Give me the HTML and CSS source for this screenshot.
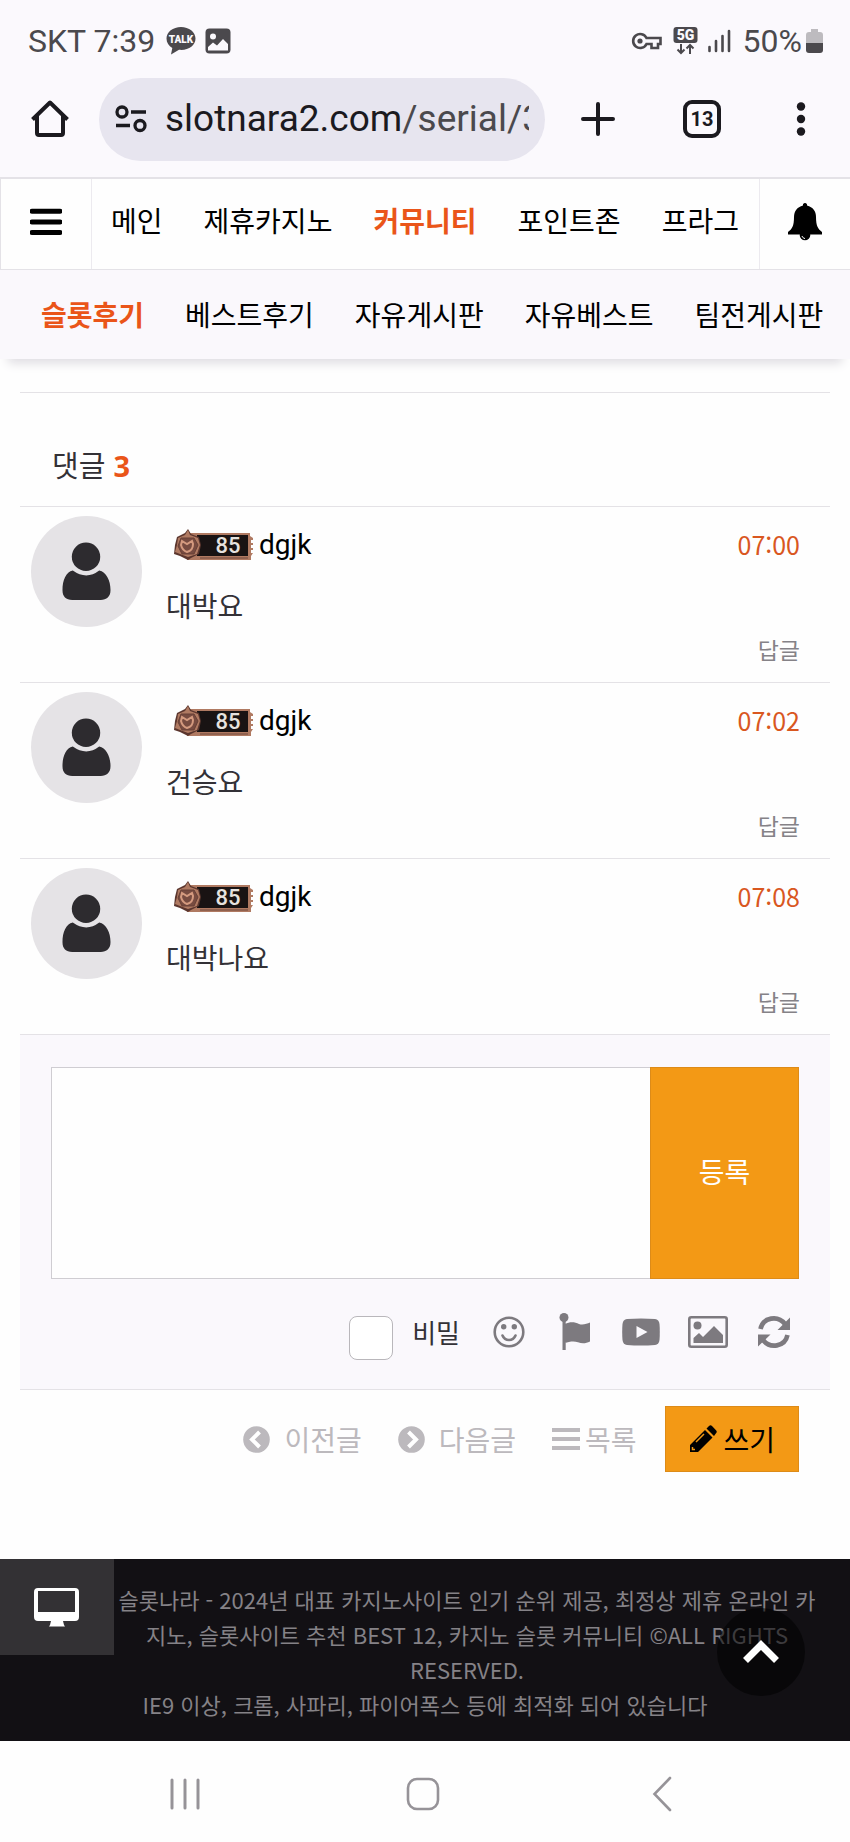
FILE: index.html
```html
<!DOCTYPE html>
<html lang="ko">
<head>
<meta charset="utf-8">
<meta name="viewport" content="width=device-width, initial-scale=1">
<title>슬롯나라</title>
<link rel="stylesheet" href="styles.css">
</head>
<body>
<div class="chrome">
  <div class="status">
    <span class="status-text">SKT 7:39</span>
    <svg class="talk" width="30" height="28" viewBox="0 0 30 28" aria-hidden="true"><path fill="#4b494d" d="M15 0C7 0 .5 5 .5 11.500c0 4.300 2.300 7.500 5.800 9.500L5 27.500l8-4.700c9 1 16.500-4 16.500-11.300C29.500 5 23 0 15 0z"/><text x="15" y="15.500" text-anchor="middle" class="talk-label">TALK</text></svg>
    <svg width="26" height="26" viewBox="0 0 26 26" aria-hidden="true"><rect x=".5" y=".5" width="25" height="25" rx="4" fill="#4b494d"/><circle cx="8" cy="8.500" r="3" fill="#fbf9fd"/><path fill="#fbf9fd" d="M3 19l5-4.500 4 3L18 11l5 5v6.500H3z"/></svg>
    <span class="grow"></span>
    <svg class="key" width="31" height="18" viewBox="0 0 31 18" aria-hidden="true"><path d="M15.500 6h14v6H27v4h-6.500v-4h-5A7 7 0 1 1 15.500 6z" fill="none" stroke="#4b494d" stroke-width="2.600"/><circle cx="9" cy="9" r="2.600" fill="#4b494d"/></svg>
    <svg class="five" width="25" height="28" viewBox="0 0 25 28" aria-hidden="true"><rect x=".5" width="24" height="16" rx="3" fill="#4b494d"/><text x="12.500" y="13" text-anchor="middle" class="five-label">5G</text><path d="M8 17v9M4.500 22.500L8 26l3.500-3.500M17 27v-9M13.500 21.500L17 18l3.500 3.500" fill="none" stroke="#4b494d" stroke-width="2"/></svg>
    <svg class="signal" width="24" height="24" viewBox="0 0 24 24" aria-hidden="true"><path d="M2.500 22v-4M9 22V12M15.500 22V7M22 22V2" stroke="#4b494d" stroke-width="2.600" stroke-linecap="round"/></svg>
    <span class="status-text">50%</span>
    <svg class="battery" width="17" height="24" viewBox="0 0 17 24" aria-hidden="true"><path fill="#bdbbbf" d="M5 0h7v3h2a3 3 0 0 1 3 3v9H0V6a3 3 0 0 1 3-3h2z"/><path fill="#4b494d" d="M0 14h17v7a3 3 0 0 1-3 3H3a3 3 0 0 1-3-3z"/></svg>
  </div>
  <div class="toolbar">
    <button class="bare home" type="button" aria-label="홈"><svg width="38" height="38" viewBox="0 0 38 38"><path d="M1.500 19.500L19 2.500l17.500 17M6 16v17a2 2 0 0 0 2 2h22a2 2 0 0 0 2-2V16" fill="none" stroke="#1b1a1f" stroke-width="4" stroke-linejoin="round"/></svg></button>
    <a class="address" href="#">
      <svg width="32" height="28" viewBox="0 0 32 28" aria-hidden="true"><g fill="none" stroke="#1b1a1f" stroke-width="3.300"><circle cx="7" cy="7" r="5"/><circle cx="25" cy="20.500" r="5"/><path d="M16 7h15M1 20.500h14"/></g></svg>
      <span class="url"><b>slotnara2.com</b>/serial/3</span>
    </a>
    <button class="bare plus" type="button" aria-label="새 탭"><svg width="34" height="34" viewBox="0 0 34 34"><path d="M17 2v30M2 17h30" stroke="#1b1a1f" stroke-width="4" stroke-linecap="round"/></svg></button>
    <button class="bare tabs" type="button">13</button>
    <button class="bare dots" type="button" aria-label="메뉴"><svg width="10" height="34" viewBox="0 0 10 34" fill="#1b1a1f"><circle cx="5" cy="4.500" r="4.200"/><circle cx="5" cy="17" r="4.200"/><circle cx="5" cy="29.500" r="4.200"/></svg></button>
  </div>
</div>

<header class="site-head">
  <div class="main-row">
    <button class="bare side left" type="button" aria-label="전체 메뉴"><svg width="32" height="28" viewBox="0 0 32 28"><path d="M2 3.200h28M2 14h28M2 24.500h28" stroke="#000" stroke-width="5" stroke-linecap="round"/></svg></button>
    <nav class="main-nav">
      <a href="#">메인</a><a href="#">제휴카지노</a><a class="on" href="#">커뮤니티</a><a href="#">포인트존</a><a href="#">프라그</a>
    </nav>
    <button class="bare side right" type="button" aria-label="알림"><svg width="36" height="38" viewBox="0 0 36 38"><path d="M18 0a2 2 0 0 1 2 2.500C26 4 29 8.500 29 14c0 9 2 12 6 15v2.500H1V29c4-3 6-6 6-15 0-5.500 3-10 9-11.500A2 2 0 0 1 18 0z"/><circle cx="18" cy="32" r="5.300"/><path d="M15 33c.5 1.500 1.500 2.300 3 2.500" fill="none" stroke="#fff" stroke-width="1"/></svg></button>
  </div>
  <nav class="sub-nav">
    <a class="on" href="#">슬롯후기</a><a href="#">베스트후기</a><a href="#">자유게시판</a><a href="#">자유베스트</a><a href="#">팀전게시판</a>
  </nav>
</header>

<svg class="defs" aria-hidden="true">
  <symbol id="person" viewBox="0 0 50 60"><circle cx="24.500" cy="15" r="14.500"/><path d="M11 29q14 10 27 0c7 1.500 11.500 10 11.500 20 0 7-4 10-10 10h-29C4 59 .5 56 .5 49 .5 39 4 30.500 11 29z"/></symbol>
  <symbol id="level" viewBox="0 0 80 34">
    <path fill="#b07a62" d="M12 5h65v3l3 2v2h-2v3h2v2h-2v3h2v2h-2v3h2l-2 3v4H14z"/>
    <path fill="#191313" d="M24 7h51v21H24z"/>
    <path fill="#5b362e" d="M15 1l3 5 8 3 2 8-2 9-8 4-3 2-8-4-6-2 1-9 2-8 8-4z"/>
    <path fill="#b07a62" d="M15 2l2 5 8 3 2 7-3 9-9 3-8-3-5-2 2-7 1-7 7-3z"/>
    <path fill="#774b40" stroke="#684036" stroke-width="1" d="M8 10h13l4 7-4 9H9l-4-8z"/>
    <path fill="none" stroke="#d49a7f" stroke-width="2" d="M9 13l-1 4c1 4 3 6 6 7 4-1 6-4 6-8l-1-3-5 3z"/>
    <path stroke="#71493c" d="M27 30h48"/>
    <text class="level-label" x="55" y="25" text-anchor="middle">85</text>
  </symbol>
</svg>

<main class="board">
  <h2 class="count">댓글 <strong>3</strong></h2>
  <article class="comment">
    <span class="avatar"><svg><use href="#person"/></svg></span>
    <div class="body">
      <div class="meta"><svg class="level"><use href="#level"/></svg><span class="name">dgjk</span><time>07:00</time></div>
      <p>대박요</p>
      <a class="reply" href="#">답글</a>
    </div>
  </article>
  <article class="comment">
    <span class="avatar"><svg><use href="#person"/></svg></span>
    <div class="body">
      <div class="meta"><svg class="level"><use href="#level"/></svg><span class="name">dgjk</span><time>07:02</time></div>
      <p>건승요</p>
      <a class="reply" href="#">답글</a>
    </div>
  </article>
  <article class="comment">
    <span class="avatar"><svg><use href="#person"/></svg></span>
    <div class="body">
      <div class="meta"><svg class="level"><use href="#level"/></svg><span class="name">dgjk</span><time>07:08</time></div>
      <p>대박나요</p>
      <a class="reply" href="#">답글</a>
    </div>
  </article>

  <form class="write">
    <div class="entry">
      <textarea aria-label="댓글 내용"></textarea>
      <button class="submit" type="button">등록</button>
    </div>
    <div class="tools">
      <input type="checkbox" id="secret"><label for="secret">비밀</label>
      <button class="bare smile" type="button" aria-label="이모티콘"><svg width="32" height="32" viewBox="0 0 32 32"><g fill="none" stroke="#7d7a7f" stroke-width="2.600"><circle cx="16" cy="16" r="14.300"/><path d="M9.500 19.500c2.500 6 10.500 6 13 0" stroke-linecap="round"/></g><circle cx="10.700" cy="10.700" r="2.700" fill="#7d7a7f"/><circle cx="21.300" cy="10.700" r="2.700" fill="#7d7a7f"/></svg></button>
      <button class="bare flag" type="button" aria-label="깃발"><svg width="32" height="38" viewBox="0 0 32 38" fill="#7d7a7f"><circle cx="5" cy="4.500" r="4.500"/><path d="M3.500 6h3.200v31H3.500zM6 11c5-2.500 10-2 14 0 4 1.500 8-.5 11-1.500v19c-4 2-8 2.500-12 .7-4-1.500-9-.7-13 .8z"/></svg></button>
      <button class="bare video" type="button" aria-label="동영상"><svg width="38" height="28" viewBox="0 0 38 28"><path fill="#7d7a7f" d="M5 1Q19 0 33 1q4 .3 4.500 5 .6 8 0 16-.5 4.500-4.500 5-14 1-28 0-4-.5-4.500-5-.6-8 0-16Q1 1.300 5 1z"/><path fill="#faf8fc" d="M14.500 8l11 6-11 6z"/></svg></button>
      <button class="bare image" type="button" aria-label="이미지"><svg width="40" height="32" viewBox="0 0 40 32"><rect x="1.300" y="1.300" width="37.400" height="29.400" rx="2" fill="none" stroke="#7d7a7f" stroke-width="2.600"/><circle cx="9.500" cy="9.500" r="4" fill="#7d7a7f"/><path fill="#7d7a7f" d="M5.500 27v-5l5.500-5 4 4L26 10l9 9v8z"/></svg></button>
      <button class="bare refresh" type="button" aria-label="새로고침"><svg width="32" height="32" viewBox="0 0 32 32"><g fill="none" stroke="#7d7a7f" stroke-width="4.600"><path d="M2.500 13C5 1 20 -1 27 8"/><path d="M29.500 19C27 31 12 33 5 24"/></g><path fill="#7d7a7f" d="M32 1.500V14H19.500zM0 30.500V18.500h12.500z"/></svg></button>
    </div>
  </form>

  <div class="actions">
    <a href="#"><svg width="27" height="27" viewBox="0 0 27 27"><circle cx="13.500" cy="13.500" r="13.300" fill="#bcb9bd"/><path d="M16.500 6l-7.500 7.500 7.500 7.500" fill="none" stroke="#fff" stroke-width="4"/></svg><span>이전글</span></a>
    <a href="#"><svg width="27" height="27" viewBox="0 0 27 27"><circle cx="13.500" cy="13.500" r="13.300" fill="#bcb9bd"/><path d="M10.500 6l7.500 7.500-7.500 7.500" fill="none" stroke="#fff" stroke-width="4"/></svg><span>다음글</span></a>
    <a class="list" href="#"><svg width="28" height="24" viewBox="0 0 28 24"><path d="M0 3h28M0 12h28M0 21h28" stroke="#bcb9bd" stroke-width="4"/></svg><span>목록</span></a>
    <a class="compose" href="#"><svg width="28" height="28" viewBox="0 0 28 28"><path d="M1 20L16 5l7.500 7.500L9 27H1zM17.500 3.500l2.500-2.500q1.500-1.300 3 0l4 4.300q1.500 1.500 0 3L25 11z"/><path fill="none" stroke="#f39915" stroke-width="1.500" d="M7 17l8-8M3.500 22v2.500H6"/></svg><span>쓰기</span></a>
  </div>
</main>

<footer class="foot">
  <button class="bare pc" type="button" aria-label="PC 버전"><svg width="46" height="39" viewBox="0 0 46 39"><path fill="#fff" fill-rule="evenodd" d="M4 0h37q4 0 4 4v25q0 4-4 4H29l1 4 1 1.500H15l1-1.500 1-4H4q-4 0-4-4V4q0-4 4-4zm0 3v21h37V3z"/></svg></button>
  <p>슬롯나라 - 2024년 대표 카지노사이트 인기 순위 제공, 최정상 제휴 온라인 카지노, 슬롯사이트 추천 BEST 12, 카지노 슬롯 커뮤니티 ©ALL RIGHTS RESERVED.<br>IE9 이상, 크롬, 사파리, 파이어폭스 등에 최적화 되어 있습니다</p>
  <button class="bare top" type="button" aria-label="맨 위로"><svg width="36" height="24" viewBox="0 0 36 24"><path d="M2.500 20.500L18 5l15.500 15.500" fill="none" stroke="#fff" stroke-width="7"/></svg></button>
</footer>

<nav class="device">
  <button class="bare" type="button" aria-label="최근 앱"><svg width="32" height="34" viewBox="0 0 32 34"><path d="M3 3v28M16 3v28M29 3v28" stroke="#969398" stroke-width="3" stroke-linecap="round"/></svg></button>
  <button class="bare" type="button" aria-label="홈 화면"><svg width="34" height="34" viewBox="0 0 34 34"><rect x="2" y="2" width="30" height="30" rx="9" fill="none" stroke="#969398" stroke-width="2.600"/></svg></button>
  <button class="bare" type="button" aria-label="뒤로"><svg width="20" height="36" viewBox="0 0 20 36"><path d="M18 2L2.500 18 18 34" fill="none" stroke="#969398" stroke-width="2.600" stroke-linecap="round"/></svg></button>
</nav>
</body>
</html>
```
FILE: styles.css
```css
* { box-sizing: border-box; }
body {
  margin: 0;
  background: #fefefe;
  color: #000;
  font-family: "Noto Sans CJK KR", sans-serif;
  font-size: 28px;
  line-height: 40px;
}
a { color: inherit; text-decoration: none; white-space: nowrap; }
svg { display: block; flex: none; }
.defs { width: 0; height: 0; position: absolute; }
.bare {
  display: flex;
  align-items: center;
  justify-content: center;
  flex: none;
  padding: 0;
  border: 0;
  background: none;
  color: inherit;
  font: inherit;
}
.grow { flex: 1; }

/* Phone status bar and browser toolbar */
.chrome { background: #fbf9fd; font-family: Roboto, sans-serif; }
.status {
  display: flex;
  align-items: center;
  height: 77px;
  padding: 5px 27px 0 28px;
}
.status-text { color: #4b494d; font-size: 32px; }
.talk { margin: 0 9px 0 11px; }
.talk-label { fill: #fbf9fd; font: 900 10px Roboto, sans-serif; }
.five-label { fill: #fbf9fd; font: 900 14px Roboto, sans-serif; }
.five { margin: 0 9px 0 11px; }
.signal { margin-right: 12px; }
.battery { margin-left: 4px; }
.toolbar { display: flex; align-items: center; height: 100px; padding: 0 44px 16px 31px; }
.home { margin-right: 30px; }
.address {
  display: flex;
  align-items: center;
  gap: 18px;
  flex: 1;
  min-width: 0;
  height: 83px;
  padding: 0 16px;
  border-radius: 42px;
  background: #e7e5ef;
}
.url { flex: 1; overflow: hidden; color: #4b494d; font-size: 37px; line-height: 50px; }
.url b { color: #1b1a1f; font-weight: 400; }
.plus { margin-left: 36px; }
.tabs {
  width: 38px;
  height: 38px;
  margin: 0 75px 0 68px;
  border: 4px solid #1b1a1f;
  border-radius: 9px;
  color: #1b1a1f;
  font-size: 20px;
  font-weight: 700;
}

/* Site navigation */
.site-head { box-shadow: 0 12px 10px -8px #dddbe0; background: #faf8fc; }
.main-row {
  display: flex;
  height: 93px;
  border: solid #e4e2e7;
  border-width: 2px 0 1px 1px;
  background: #fefefe;
}
.side { width: 91px; padding-bottom: 4px; }
.left { border-right: 1px solid #eceaef; }
.right { border-left: 1px solid #eceaef; }
.main-nav {
  display: flex;
  align-items: center;
  justify-content: space-between;
  flex: 1;
  padding: 0 20px 8px 19px;
}
.sub-nav { display: flex; align-items: center; gap: 41px; height: 89px; padding: 0 0 2px 41px; }
.on { color: #ea5519; font-weight: 700; }

/* Comments */
.board { margin: 33px 20px 0; border-top: 1px solid #e4e2e6; }
.count { margin: 0; padding: 51px 32px 20px; color: #333136; font-size: 29px; font-weight: 400; }
.count strong { color: #ea5519; font-family: "Noto Sans", sans-serif; }
.comment {
  display: flex;
  gap: 24px;
  padding: 9px 30px 20px 11px;
  border-top: 1px solid #e4e2e6;
}
.avatar {
  display: grid;
  place-items: center;
  flex: none;
  width: 111px;
  height: 111px;
  border-radius: 50%;
  background: #e5e3e6;
}
.avatar svg { width: 49px; height: 59px; fill: #2d2b2f; }
.body { flex: 1; min-width: 0; }
.meta { display: flex; align-items: center; height: 58px; padding-left: 7px; }
.level { width: 80px; height: 34px; }
.level-label { fill: #e6e2df; font: 500 22px Roboto, sans-serif; }
.name { margin-left: 6px; font-family: Roboto, sans-serif; font-size: 28px; }
time { margin-left: auto; padding-bottom: 3px; color: #d9571f; font-size: 25px; }
.comment p { margin: 0; color: #333136; line-height: 62px; }
.reply { display: block; color: #858287; font-size: 23px; line-height: 26px; text-align: right; }

/* Comment form */
.write {
  padding: 32px 31px 29px;
  border: solid #e4e2e6;
  border-width: 1px 0;
  background: #faf8fc;
}
.entry { display: flex; height: 212px; }
textarea {
  flex: 1;
  min-width: 0;
  border: 1px solid #cfcdd2;
  border-right: 0;
  border-radius: 0;
  background: #fefefe;
  font: inherit;
  resize: none;
}
.submit {
  width: 149px;
  padding: 0 0 5px;
  border: 1px solid #dd8b18;
  background: #f39915;
  color: #fff;
  font: inherit;
}
.tools {
  display: flex;
  align-items: flex-start;
  justify-content: flex-end;
  padding: 34px 9px 0 0;
}
.tools .bare { height: 38px; }
.tools input {
  appearance: none;
  width: 44px;
  height: 44px;
  margin: 3px 19px 0 0;
  border: 1px solid #b9b7bb;
  border-radius: 8px;
  background: #fff;
}
.tools label { margin-right: 33px; color: #333136; font-size: 26px; line-height: 38px; }
.flag { margin: 0 31px 0 34px; }
.image { margin: 0 30px 0 28px; }

/* Post links */
.actions {
  display: flex;
  align-items: center;
  justify-content: flex-end;
  gap: 36px;
  padding: 16px 31px 87px;
  color: #bcb9bd;
}
.actions a { display: flex; align-items: center; gap: 14px; }
.actions .list { gap: 5px; }
.actions .compose {
  gap: 6px;
  margin-left: -7px;
  padding: 12px 23px;
  border: 1px solid #dd8b18;
  background: #f39915;
  color: #000;
}

/* Footer */
.foot { position: relative; padding-bottom: 19px; background: #121014; }
.pc { float: left; width: 114px; height: 96px; background: #333134; }
.foot p {
  margin: 0 30px;
  padding-top: 23px;
  color: #858287;
  font-size: 22px;
  line-height: 35px;
  text-align: center;
}
.top {
  position: absolute;
  right: 45px;
  top: 49px;
  width: 88px;
  height: 88px;
  border-radius: 50%;
  background: rgba(0, 0, 0, .55);
}
.device {
  display: grid;
  grid-template-columns: repeat(3, 1fr);
  height: 99px;
  padding: 6px 69px 0 66px;
}
```
